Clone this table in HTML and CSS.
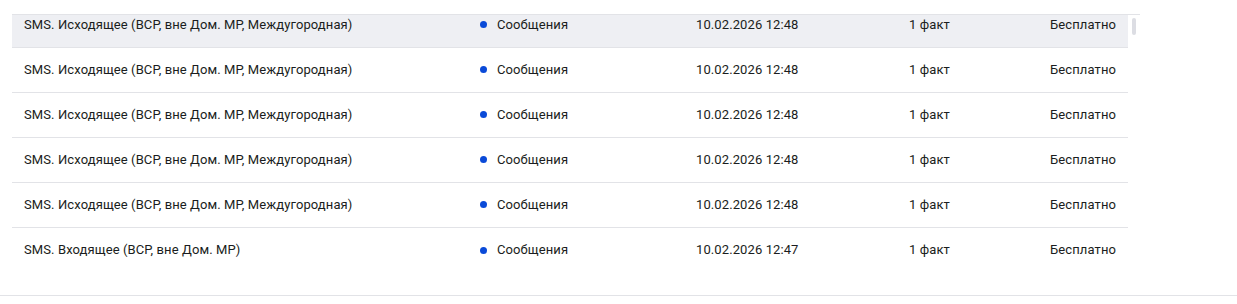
FILE: index.html
```html
<!DOCTYPE html>
<html lang="ru">
<head>
<meta charset="utf-8">
<title>Детализация</title>
<link rel="stylesheet" href="styles.css">
</head>
<body>
<div class="page">
  <div class="table">
    <div class="scroller">
      <div class="rows">
        <div class="row row-hover">
          <div class="cell">SMS. Исходящее (ВСР, вне Дом. МР, Междугородная)</div>
          <div class="cell cat"><span class="dot"></span>Сообщения</div>
          <div class="cell">10.02.2026 12:48</div>
          <div class="cell">1 факт</div>
          <div class="cell price">Бесплатно</div>
        </div>
        <div class="row">
          <div class="cell">SMS. Исходящее (ВСР, вне Дом. МР, Междугородная)</div>
          <div class="cell cat"><span class="dot"></span>Сообщения</div>
          <div class="cell">10.02.2026 12:48</div>
          <div class="cell">1 факт</div>
          <div class="cell price">Бесплатно</div>
        </div>
        <div class="row">
          <div class="cell">SMS. Исходящее (ВСР, вне Дом. МР, Междугородная)</div>
          <div class="cell cat"><span class="dot"></span>Сообщения</div>
          <div class="cell">10.02.2026 12:48</div>
          <div class="cell">1 факт</div>
          <div class="cell price">Бесплатно</div>
        </div>
        <div class="row">
          <div class="cell">SMS. Исходящее (ВСР, вне Дом. МР, Междугородная)</div>
          <div class="cell cat"><span class="dot"></span>Сообщения</div>
          <div class="cell">10.02.2026 12:48</div>
          <div class="cell">1 факт</div>
          <div class="cell price">Бесплатно</div>
        </div>
        <div class="row">
          <div class="cell">SMS. Исходящее (ВСР, вне Дом. МР, Междугородная)</div>
          <div class="cell cat"><span class="dot"></span>Сообщения</div>
          <div class="cell">10.02.2026 12:48</div>
          <div class="cell">1 факт</div>
          <div class="cell price">Бесплатно</div>
        </div>
        <div class="row row-last">
          <div class="cell">SMS. Входящее (ВСР, вне Дом. МР)</div>
          <div class="cell cat"><span class="dot"></span>Сообщения</div>
          <div class="cell">10.02.2026 12:47</div>
          <div class="cell">1 факт</div>
          <div class="cell price">Бесплатно</div>
        </div>
      </div>
      <div class="track"><div class="thumb"></div></div>
    </div>
  </div>
  <div class="footer-line"></div>
</div>
</body>
</html>
```

FILE: styles.css
```css
* { box-sizing: border-box; }
html, body { margin: 0; padding: 0; background: #ffffff; }
body {
  font-family: Roboto, "Noto Sans", "Liberation Sans", sans-serif;
  font-size: 13px;
  line-height: 16px;
  letter-spacing: 0.1px;
  color: #1a1d20;
}
.page {
  width: 1237px;
  height: 304px;
  padding-top: 14px;
}
.table {
  width: 1128px;
  margin-left: 12px;
  border-top: 1px solid #e2e3e7;
}
.scroller {
  display: flex;
  height: 280px;
  overflow: hidden;
}
.rows {
  width: 1116px;
  margin-top: -12px;
}
.row {
  display: grid;
  grid-template-columns: 456px 216px 213px 141px 1fr;
  align-items: center;
  height: 45px;
  padding: 0 12px 1px;
  border-bottom: 1px solid #e2e3e7;
}
.row-hover { background: #eeeff3; }
.row-last { border-bottom: none; }
.cell { white-space: nowrap; }
.cat {
  display: flex;
  align-items: center;
  gap: 10px;
}
.dot {
  flex: none;
  display: block;
  width: 7px;
  height: 7px;
  border-radius: 50%;
  background: #0a4ad8;
}
.price { text-align: right; }
.track {
  width: 12px;
  padding: 3px 4px 0;
}
.thumb {
  width: 4px;
  height: 17px;
  border-radius: 2px;
  background: #dcdde3;
}
.footer-line {
  height: 1px;
  background: #e2e3e7;
}
```
